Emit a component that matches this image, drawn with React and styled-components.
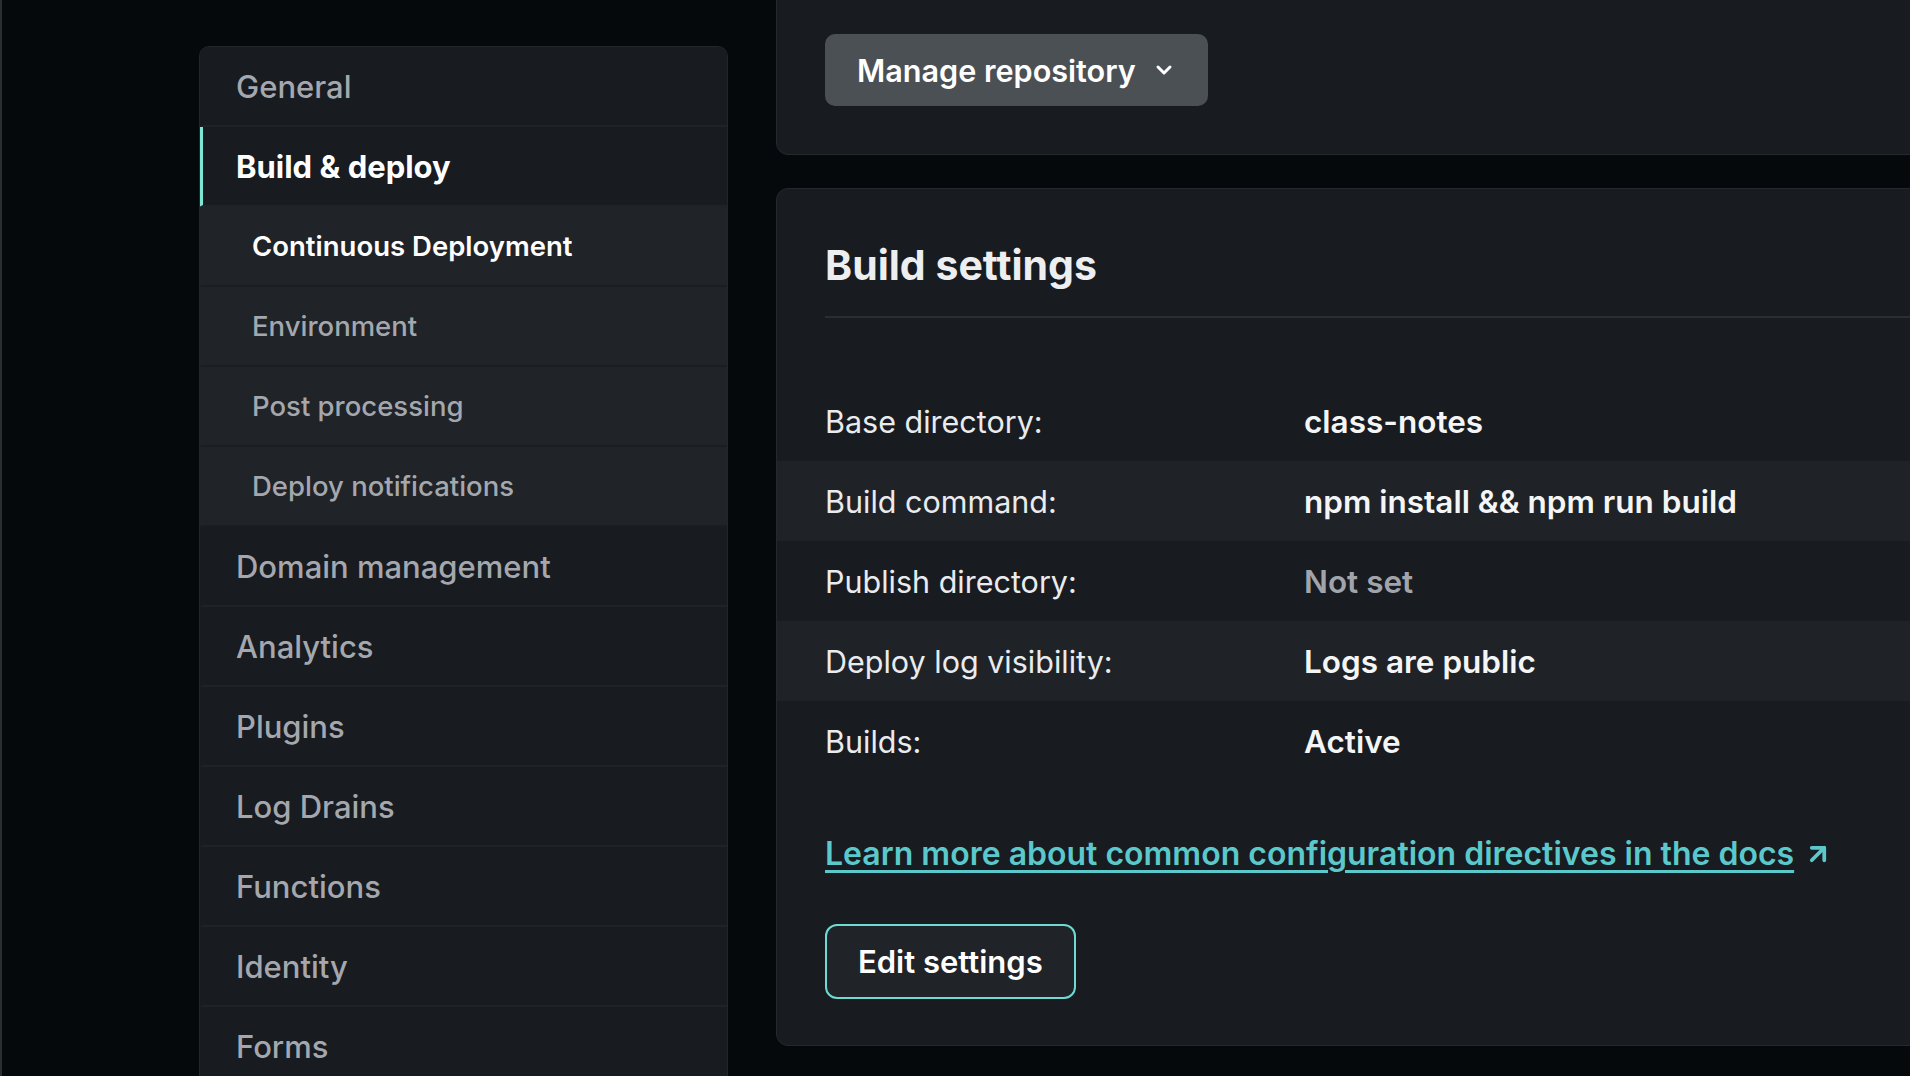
import React from 'react'
import styled, { createGlobalStyle } from 'styled-components'
import { ChevronDown, ArrowUpRight } from 'lucide-react'

const GlobalStyle = createGlobalStyle`
  html, body {
    margin: 0;
    padding: 0;
    background: #06090c;
    font-family: Inter, "Noto Sans", "Liberation Sans", sans-serif;
    -webkit-font-smoothing: antialiased;
  }
  #root {
    height: 100vh;
    overflow: hidden;
  }
`

const Page = styled.div`
  display: flex;
  align-items: flex-start;
  height: 1076px;
  box-sizing: border-box;
  border-left: 2px solid #2a2d31;
  padding-left: 197px;
  overflow: hidden;
`

const Sidebar = styled.nav`
  flex: 0 0 527px;
  margin-top: 46px;
  background: #181b20;
  border: 1px solid #22252a;
  border-bottom: none;
  border-radius: 10px 10px 0 0;
  overflow: hidden;
`

const NavItem = styled.div`
  display: flex;
  align-items: center;
  box-sizing: border-box;
  height: 80px;
  padding-left: ${p => (p.sub ? 49 : 33)}px;
  border-bottom: 2px solid ${p => (p.sub ? '#1a1d21' : '#1f2227')};
  border-left: 4px solid ${p => (p.active ? '#7ee6d4' : 'transparent')};
  margin-left: -1px;
  background: ${p => (p.sub ? '#202328' : '#181b20')};
  color: ${p => (p.active || p.current ? '#ffffff' : '#a4a8ae')};
  font-size: ${p => (p.sub ? 27.5 : 31)}px;
  font-weight: ${p => (p.active ? 700 : p.current ? 600 : 500)};
`

const Main = styled.main`
  flex: 1;
  margin-left: 48px;
  margin-right: -24px;
  display: flex;
  flex-direction: column;
  gap: 33px;
`

const Card = styled.section`
  background: #181b20;
  border: 1px solid #25282d;
  border-radius: 12px;
  padding: ${p => (p.top ? '53px 48px 48px' : '48px 48px 46px')};
  margin-top: ${p => (p.top ? '-20px' : '0')};
`

const Button = styled.button`
  display: inline-flex;
  align-items: center;
  gap: 16px;
  box-sizing: border-box;
  height: ${p => (p.outline ? 75 : 72)}px;
  padding: ${p => (p.outline ? '0 31px' : '0 32px 0 32px')};
  border-radius: ${p => (p.outline ? 12 : 10)}px;
  border: ${p => (p.outline ? '2px solid #6fd9d3' : 'none')};
  background: ${p => (p.outline ? '#202328' : '#4b5055')};
  color: #ffffff;
  font-family: inherit;
  font-size: ${p => (p.outline ? 31 : 30.6)}px;
  font-weight: 600;
  cursor: pointer;
`

const Heading = styled.h2`
  margin: 0;
  padding-bottom: 22px;
  line-height: 57px;
  font-size: 41px;
  font-weight: 700;
  color: #eceef0;
  border-bottom: 2px solid #2a2d32;
  margin-right: -48px;
`

const Rows = styled.div`
  margin: 63px -48px 0;
`

const Row = styled.div`
  display: grid;
  grid-template-columns: 479px 1fr;
  align-items: center;
  height: 80px;
  padding: 0 48px;
  background: ${p => (p.striped ? '#1f2227' : 'transparent')};
`

const Label = styled.span`
  color: #e9ebee;
  font-size: 30.5px;
  font-weight: 400;
`

const Value = styled.span`
  color: ${p => (p.muted ? '#a1a5ab' : '#f4f5f6')};
  font-size: 31.5px;
  font-weight: 600;
`

const DocsLink = styled.a`
  display: inline-flex;
  align-items: center;
  gap: 9px;
  margin-top: 53px;
  line-height: 40px;
  color: #5bc8cb;
  font-size: 32px;
  font-weight: 600;
  text-decoration: none;

  span {
    text-decoration: underline;
    text-decoration-thickness: 3px;
    text-underline-offset: 5px;
  }
`

const Actions = styled.div`
  margin-top: 50px;
`

const navItems = [
  { label: 'General' },
  { label: 'Build & deploy', active: true },
  { label: 'Continuous Deployment', sub: true, current: true },
  { label: 'Environment', sub: true },
  { label: 'Post processing', sub: true },
  { label: 'Deploy notifications', sub: true },
  { label: 'Domain management' },
  { label: 'Analytics' },
  { label: 'Plugins' },
  { label: 'Log Drains' },
  { label: 'Functions' },
  { label: 'Identity' },
  { label: 'Forms' },
]

const settings = [
  { label: 'Base directory:', value: 'class-notes' },
  { label: 'Build command:', value: 'npm install && npm run build' },
  { label: 'Publish directory:', value: 'Not set', muted: true },
  { label: 'Deploy log visibility:', value: 'Logs are public' },
  { label: 'Builds:', value: 'Active' },
]

export default function App() {
  return (
    <>
      <GlobalStyle />
      <Page>
        <Sidebar>
          {navItems.map(item => (
            <NavItem
              key={item.label}
              sub={item.sub}
              active={item.active}
              current={item.current}
            >
              {item.label}
            </NavItem>
          ))}
        </Sidebar>
        <Main>
          <Card top>
            <Button>
              Manage repository
              <ChevronDown size={24} strokeWidth={3} />
            </Button>
          </Card>
          <Card>
            <Heading>Build settings</Heading>
            <Rows>
              {settings.map((s, i) => (
                <Row key={s.label} striped={i % 2 === 1}>
                  <Label>{s.label}</Label>
                  <Value muted={s.muted}>{s.value}</Value>
                </Row>
              ))}
            </Rows>
            <DocsLink href="#">
              <span>Learn more about common configuration directives in the docs</span>
              <ArrowUpRight size={30} strokeWidth={3} />
            </DocsLink>
            <Actions>
              <Button outline>Edit settings</Button>
            </Actions>
          </Card>
        </Main>
      </Page>
    </>
  )
}
